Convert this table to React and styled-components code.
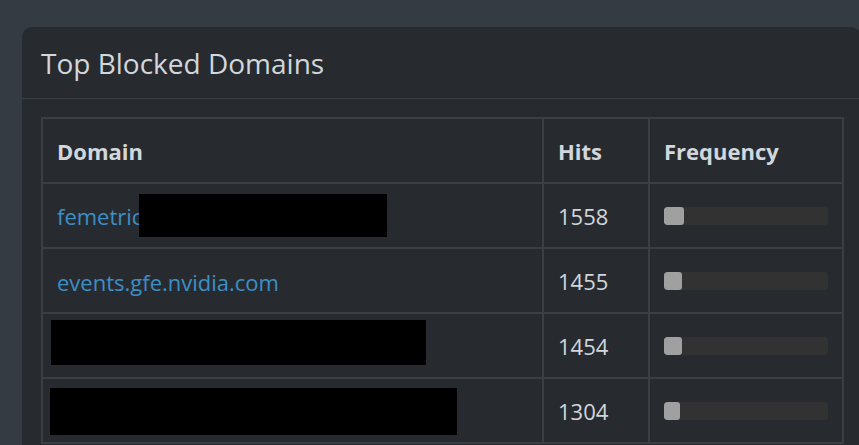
import React from "react";
import styled, { createGlobalStyle } from "styled-components";

const GlobalStyle = createGlobalStyle`
  html, body {
    margin: 0;
    padding: 0;
    background: #353b42;
    overflow: hidden;
  }
  body {
    font-family: "Open Sans", "Noto Sans", sans-serif;
  }
`;

const rows = [
  { domain: "femetric", hits: 1558, pct: 20, redact: { width: 248, shift: -3, height: 43, lift: 0 } },
  { domain: "events.gfe.nvidia.com", hits: 1455, pct: 18 },
  { domain: "", hits: 1454, pct: 18, redact: { width: 375, shift: -6, height: 45, lift: 3 } },
  { domain: "", hits: 1304, pct: 16, redact: { width: 407, shift: -7, height: 47, lift: -1 } },
];

const App = () => {
  return (
    <Page>
      <GlobalStyle />
      <Card>
        <CardHeader>
          <Title>Top Blocked Domains</Title>
        </CardHeader>
        <CardBody>
          <Table>
            <colgroup>
              <col style={{ width: 501 }} />
              <col style={{ width: 106 }} />
              <col style={{ width: 194 }} />
            </colgroup>
            <thead>
              <tr>
                <Th>Domain</Th>
                <Th>Hits</Th>
                <Th>Frequency</Th>
              </tr>
            </thead>
            <tbody>
              {rows.map((row, i) => (
                <tr key={i}>
                  <Td>
                    <DomainLink>{row.domain}</DomainLink>
                    {row.redact && (
                      <Redact
                        $width={row.redact.width}
                        $shift={row.redact.shift}
                        $height={row.redact.height}
                        $lift={row.redact.lift}
                      />
                    )}
                  </Td>
                  <Td>{row.hits}</Td>
                  <Td>
                    <Bar>
                      <BarFill style={{ width: row.pct }} />
                    </Bar>
                  </Td>
                </tr>
              ))}
            </tbody>
          </Table>
        </CardBody>
      </Card>
    </Page>
  );
};

export default App;

const Page = styled.div`
  padding: 27px 0 0 22px;
  height: 445px;
  box-sizing: border-box;
`;

const Card = styled.div`
  width: 839px;
  background: #272b30;
  border-radius: 10px 10px 0 0;
  min-height: 430px;
`;

const CardHeader = styled.div`
  height: 72px;
  box-sizing: border-box;
  border-bottom: 1px solid #3a3f45;
  display: flex;
  align-items: center;
  padding: 0 19px;
`;

const Title = styled.h3`
  margin: 0;
  font-size: 28px;
  font-weight: 400;
  color: #d2d7dc;
`;

const CardBody = styled.div`
  padding: 18px 19px 0 19px;
`;

const Table = styled.table`
  width: 801px;
  border-collapse: collapse;
  table-layout: fixed;
  font-size: 22px;
  color: #d0d6dc;
`;

const Th = styled.th`
  height: 65px;
  box-sizing: border-box;
  border: 2px solid #3a3f45;
  text-align: left;
  padding: 0 14px;
  font-weight: 700;
  color: #d2d7dc;
`;

const Td = styled.td`
  height: 65px;
  box-sizing: border-box;
  border: 2px solid #3a3f45;
  padding: 0 14px;
  white-space: nowrap;
`;

const DomainLink = styled.a`
  color: #3c8fc6;
  text-decoration: none;
  vertical-align: middle;
`;

const Redact = styled.span`
  display: inline-block;
  vertical-align: middle;
  position: relative;
  top: ${(p) => -p.$lift}px;
  width: ${(p) => p.$width}px;
  height: ${(p) => p.$height}px;
  background: #000;
  margin-left: ${(p) => p.$shift}px;
`;

const Bar = styled.div`
  width: 164px;
  height: 18px;
  background: #323232;
  border-radius: 3px;
  overflow: hidden;
`;

const BarFill = styled.div`
  height: 100%;
  background: #a0a0a0;
  border-radius: 3px;
`;
